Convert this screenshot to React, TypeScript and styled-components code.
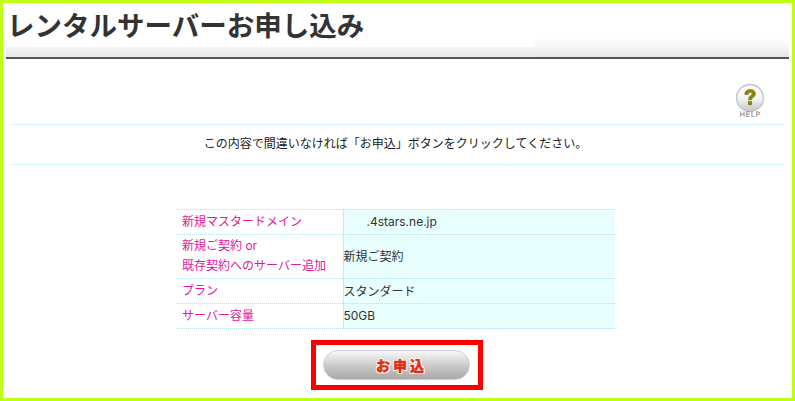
import React from "react";
import styled, { createGlobalStyle } from "styled-components";

const rows = [
  { label: ["新規マスタードメイン"], value: ".4stars.ne.jp", h: 25, indent: 23 },
  { label: ["新規ご契約 or", "既存契約へのサーバー追加"], value: "新規ご契約", h: 44, indent: 0 },
  { label: ["プラン"], value: "スタンダード", h: 25, indent: 0 },
  { label: ["サーバー容量"], value: "50GB", h: 25, indent: 0 },
];

export default function App() {
  return (
    <>
      <GlobalStyle />
      <Frame>
        <Header>
          <Title>レンタルサーバーお申し込み</Title>
          <Band>
            <BandLeft />
            <BandRight />
          </Band>
        </Header>
        <HelpRow>
          <HelpLink>
            <svg width="30" height="30" viewBox="0 0 30 30">
              <defs>
                <linearGradient id="helpFill" x1="0" y1="0" x2="0" y2="1">
                  <stop offset="0" stopColor="#ffffff" />
                  <stop offset="0.55" stopColor="#f2f2f2" />
                  <stop offset="1" stopColor="#c4c4c4" />
                </linearGradient>
              </defs>
              <circle cx="15" cy="15" r="13.4" fill="url(#helpFill)" stroke="#c9c9c9" strokeWidth="1.6" />
              <path
                d="M9.8 11.4c0-3.2 2.2-5 5.4-5 3.2 0 5.2 1.7 5.2 4.3 0 2-1.1 3-2.4 3.9-1 .7-1.3 1.2-1.3 2.2h-3.2c0-2.1.6-3.1 2-4.1 1-.7 1.5-1.2 1.5-2 0-.9-.7-1.4-1.7-1.4-1.1 0-1.8.8-1.9 2.1z"
                fill="#8a8a00"
                stroke="#5e5e00"
                strokeWidth="0.5"
              />
              <rect x="13.4" y="18.6" width="3.3" height="3.2" fill="#8a8a00" stroke="#5e5e00" strokeWidth="0.5" />
            </svg>
            <HelpLabel>HELP</HelpLabel>
          </HelpLink>
        </HelpRow>
        <Notice>この内容で間違いなければ「お申込」ボタンをクリックしてください。</Notice>
        <Summary>
          <tbody>
            {rows.map((row) => (
              <tr key={row.label[0]}>
                <LabelCell $h={row.h}>
                  {row.label.map((line) => (
                    <div key={line}>{line}</div>
                  ))}
                </LabelCell>
                <ValueCell $indent={row.indent}>{row.value}</ValueCell>
              </tr>
            ))}
          </tbody>
        </Summary>
        <ButtonRow>
          <Highlight>
            <ApplyButton type="button">お申込</ApplyButton>
          </Highlight>
        </ButtonRow>
      </Frame>
    </>
  );
}

const GlobalStyle = createGlobalStyle`
  html, body {
    margin: 0;
    padding: 0;
    background: #fff;
  }
`;

const Frame = styled.div`
  box-sizing: border-box;
  width: 795px;
  height: 401px;
  border: 3px solid #bfff14;
  overflow: hidden;
  background: #fff;
  color: #333;
  font-family: Inter, "Noto Sans CJK JP", "Noto Sans", sans-serif;
  font-size: 12px;
`;

const Header = styled.div`
  margin: 0 3px;
`;

const Title = styled.h1`
  margin: 0;
  height: 42px;
  padding-left: 1px;
  font-family: "Noto Sans CJK JP", sans-serif;
  font-size: 27.5px;
  line-height: 42px;
  font-weight: 700;
  color: #333;
  white-space: nowrap;
`;

const Band = styled.div`
  display: flex;
  align-items: flex-end;
  height: 12px;
  border-bottom: 2px solid #555;
`;

const BandLeft = styled.div`
  width: 529px;
  height: 10px;
  background: linear-gradient(#f4f4f4, #e8e8e8);
`;

const BandRight = styled.div`
  flex: 1;
  height: 20px;
  margin-top: -10px;
  background: linear-gradient(#ffffff, #f6f6f6 50%, #e6e6e6);
`;

const HelpRow = styled.div`
  display: flex;
  justify-content: flex-end;
  height: 65px;
  padding: 24px 27px 0 0;
  box-sizing: border-box;
`;

const HelpLink = styled.div`
  display: flex;
  flex-direction: column;
  align-items: center;
  width: 30px;
  height: 38px;
`;

const HelpLabel = styled.span`
  margin-top: -2px;
  font-family: "DejaVu Sans", sans-serif;
  font-size: 7.5px;
  line-height: 8px;
  letter-spacing: 0.5px;
  color: #777;
`;

const Notice = styled.div`
  height: 41px;
  margin: 0 9px;
  padding-right: 4px;
  border-top: 1px dotted #b5dde2;
  border-bottom: 1px dotted #b5dde2;
  box-sizing: border-box;
  text-align: center;
  font-size: 12px;
  line-height: 37px;
  color: #222;
`;

const Summary = styled.table`
  width: 438px;
  margin: 44px 0 0 174px;
  border-collapse: collapse;
  table-layout: fixed;
  font-size: 12px;
`;

const LabelCell = styled.td<{ $h: number }>`
  width: 166px;
  height: ${(p) => p.$h}px;
  padding: 0 0 1px 5px;
  box-sizing: border-box;
  border-top: 1px dotted #b5dde2;
  border-bottom: 1px dotted #b5dde2;
  color: #e0189a;
  line-height: 20px;
`;

const ValueCell = styled.td<{ $indent: number }>`
  padding: 0 0 2px ${(p) => p.$indent}px;
  border-top: 1px dotted #b5dde2;
  border-bottom: 1px dotted #b5dde2;
  border-left: 1px solid #c8e8ec;
  background: #e9fffd;
  color: #333;
`;

const ButtonRow = styled.div`
  display: flex;
  justify-content: flex-start;
  margin: 11px 0 0 308px;
`;

const Highlight = styled.div`
  box-sizing: border-box;
  width: 172px;
  height: 50px;
  display: flex;
  align-items: center;
  justify-content: center;
  padding-right: 2px;
  border: 5px solid #ff0000;
`;

const ApplyButton = styled.button`
  width: 147px;
  height: 30px;
  padding: 0 0 0 11px;
  border: 1px solid #cfcfcf;
  border-radius: 15px;
  background: linear-gradient(#f8f8f8, #c8c8c8 55%, #a8a8a8);
  font-family: "Noto Sans CJK JP", sans-serif;
  font-size: 14px;
  font-weight: 900;
  letter-spacing: 3px;
  color: #e03010;
  -webkit-text-stroke: 0.4px #e03010;
  text-shadow: 1px 0 0 #fff, -1px 0 0 #fff, 0 1px 0 #fff, 0 -1px 0 #fff, 1px 1px 0 #fff, -1px -1px 0 #fff, 1px -1px 0 #fff, -1px 1px 0 #fff;
`;
